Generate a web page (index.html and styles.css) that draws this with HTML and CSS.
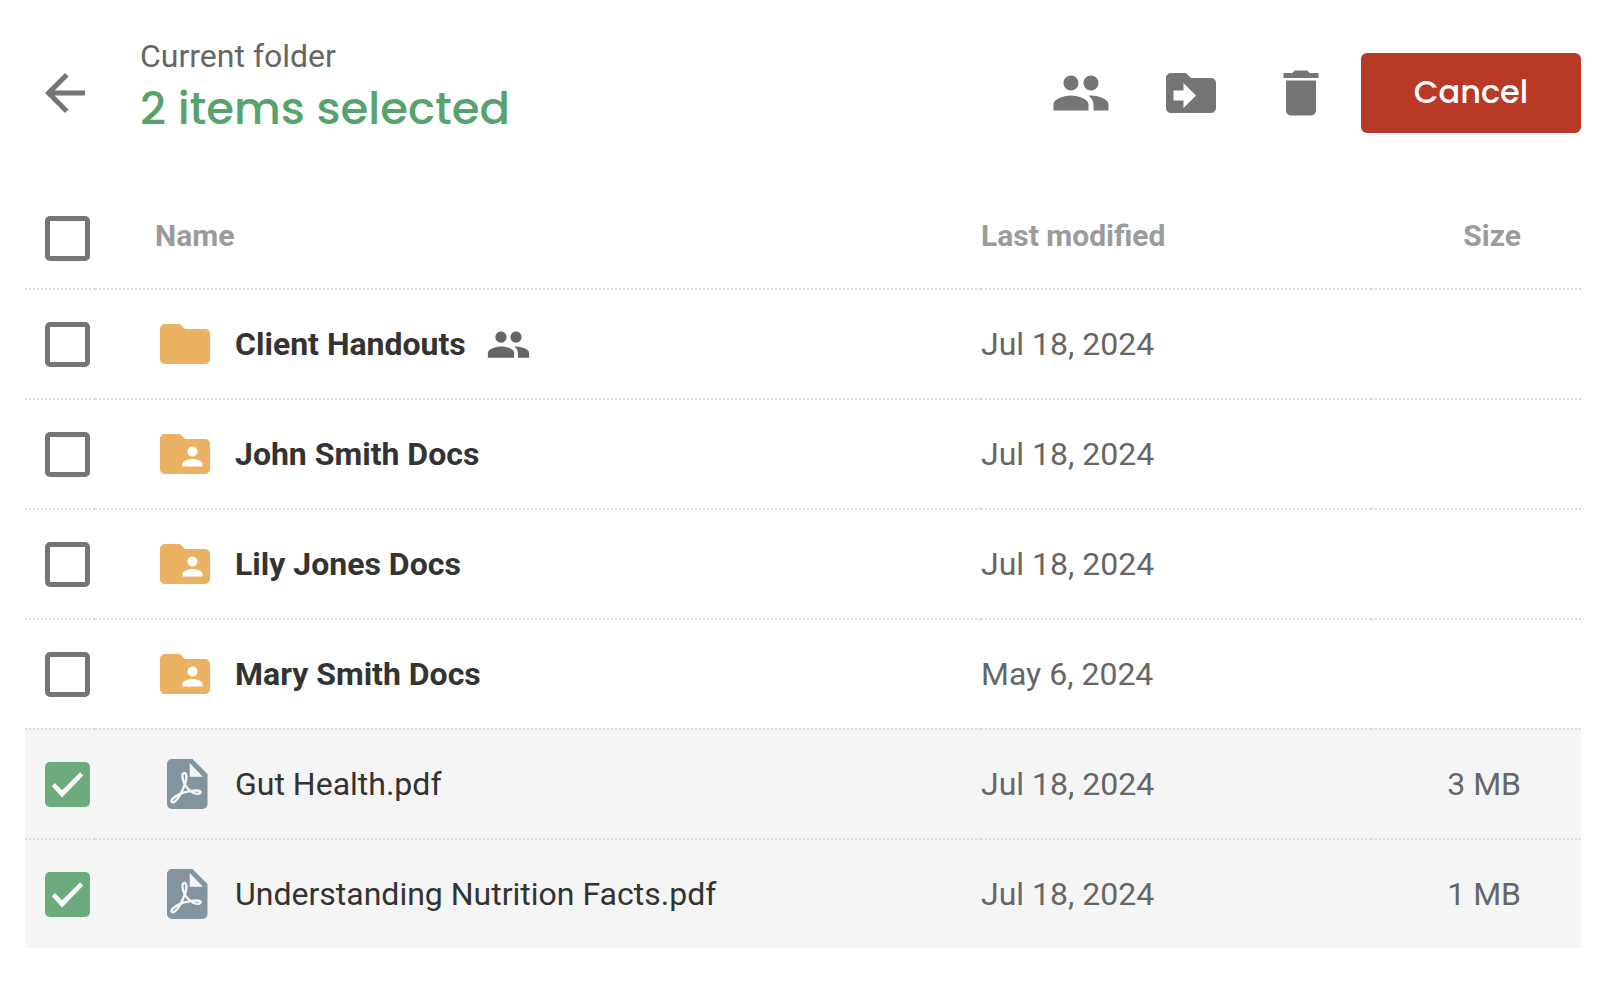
FILE: index.html
```html
<!DOCTYPE html>
<html lang="en">
<head>
<meta charset="utf-8">
<meta name="viewport" content="width=device-width, initial-scale=1">
<title>Documents</title>
<link rel="stylesheet" href="styles.css">
</head>
<body>
<svg class="sprite" aria-hidden="true">
  <symbol id="i-back" viewBox="0 0 24 24"><path d="M20 11H7.83l5.59-5.59L12 4l-8 8 8 8 1.41-1.41L7.83 13H20v-2z"/></symbol>
  <symbol id="i-group" viewBox="0 0 24 24"><path d="M16 11c1.66 0 2.99-1.34 2.99-3S17.66 5 16 5s-3 1.34-3 3 1.34 3 3 3zm-8 0c1.66 0 2.99-1.34 2.99-3S9.66 5 8 5 5 6.34 5 8s1.34 3 3 3zm0 2c-2.33 0-7 1.17-7 3.5V19h14v-2.5c0-2.33-4.67-3.5-7-3.5zm8 0c-.29 0-.62.02-.97.05 1.16.84 1.97 1.97 1.97 3.45V19h6v-2.5c0-2.33-4.67-3.5-7-3.5z"/></symbol>
  <symbol id="i-move" viewBox="0 0 24 24"><path d="M20 6h-8l-2-2H4c-1.1 0-2 .9-2 2v12c0 1.1.9 2 2 2h16c1.1 0 2-.9 2-2V8c0-1.1-.9-2-2-2zM9 18v-3H5v-4h4V8l5 5-5 5z"/></symbol>
  <symbol id="i-delete" viewBox="0 0 24 24"><path d="M6 19c0 1.1.9 2 2 2h8c1.1 0 2-.9 2-2V7H6v12zM19 4h-3.5l-1-1h-5l-1 1H5v2h14V4z"/></symbol>
  <symbol id="i-folder" viewBox="0 0 24 24"><path d="M10 4H4c-1.1 0-2 .9-2 2v12c0 1.1.9 2 2 2h16c1.1 0 2-.9 2-2V8c0-1.1-.9-2-2-2h-8l-2-2z"/></symbol>
  <symbol id="i-folder-person" viewBox="0 0 24 24"><path d="M20 6h-8l-2-2H4c-1.1 0-2 .9-2 2v12c0 1.1.9 2 2 2h16c1.1 0 2-.9 2-2V8c0-1.1-.9-2-2-2zm-5 3c1.1 0 2 .9 2 2s-.9 2-2 2-2-.9-2-2 .9-2 2-2zm4 8h-8v-1c0-1.33 2.67-2 4-2s4 .67 4 2v1z"/></symbol>
  <symbol id="i-pdf" viewBox="-12 -5 60 60">
    <path d="M5 0H25.500L40.500 15V45a5 5 0 0 1-5 5H5a5 5 0 0 1-5-5V5a5 5 0 0 1 5-5zM22.700 4V17.700H35.900z"/>
    <path class="pdf-mark" d="M17.300 14C14.600 14 15 20.500 17.800 25.500C20.500 30 25.500 34.800 30 34.900C33.500 35 34.800 32.800 32.800 32C29 30.800 18 32.300 12.500 35.200C7 37.800 3.600 41 4.600 42.800C6 44.700 10 41.500 13 36C16.500 29.500 19.400 23 19.400 18C19.400 15.200 18.600 14 17.300 14z"/>
  </symbol>
</svg>

<header class="toolbar">
  <button class="icon-button" type="button" aria-label="Back"><svg class="icon"><use href="#i-back"/></svg></button>
  <div class="heading">
    <p class="heading-label">Current folder</p>
    <h1 class="heading-title">2 items selected</h1>
  </div>
  <div class="actions">
    <button class="icon-button" type="button" aria-label="Share"><svg class="icon"><use href="#i-group"/></svg></button>
    <button class="icon-button" type="button" aria-label="Move"><svg class="icon"><use href="#i-move"/></svg></button>
    <button class="icon-button" type="button" aria-label="Delete"><svg class="icon"><use href="#i-delete"/></svg></button>
  </div>
  <button class="cancel" type="button">Cancel</button>
</header>

<main class="content">
  <table class="files">
    <colgroup><col class="col-check"><col><col class="col-date"><col class="col-size"></colgroup>
    <thead>
      <tr>
        <th class="check"><input class="checkbox" type="checkbox" aria-label="Select all"></th>
        <th class="name" scope="col">Name</th>
        <th scope="col">Last modified</th>
        <th class="size" scope="col">Size</th>
      </tr>
    </thead>
    <tbody>
      <tr>
        <td class="check"><input class="checkbox" type="checkbox" id="f1"></td>
        <td class="name"><div class="item"><svg class="icon folder"><use href="#i-folder"/></svg><label class="folder-name" for="f1">Client Handouts</label><svg class="shared"><use href="#i-group"/></svg></div></td>
        <td>Jul 18, 2024</td>
        <td class="size"></td>
      </tr>
      <tr>
        <td class="check"><input class="checkbox" type="checkbox" id="f2"></td>
        <td class="name"><div class="item"><svg class="icon folder"><use href="#i-folder-person"/></svg><label class="folder-name" for="f2">John Smith Docs</label></div></td>
        <td>Jul 18, 2024</td>
        <td class="size"></td>
      </tr>
      <tr>
        <td class="check"><input class="checkbox" type="checkbox" id="f3"></td>
        <td class="name"><div class="item"><svg class="icon folder"><use href="#i-folder-person"/></svg><label class="folder-name" for="f3">Lily Jones Docs</label></div></td>
        <td>Jul 18, 2024</td>
        <td class="size"></td>
      </tr>
      <tr>
        <td class="check"><input class="checkbox" type="checkbox" id="f4"></td>
        <td class="name"><div class="item"><svg class="icon folder"><use href="#i-folder-person"/></svg><label class="folder-name" for="f4">Mary Smith Docs</label></div></td>
        <td>May 6, 2024</td>
        <td class="size"></td>
      </tr>
      <tr class="selected">
        <td class="check"><input class="checkbox" type="checkbox" id="f5" checked></td>
        <td class="name"><div class="item"><svg class="icon pdf"><use href="#i-pdf"/></svg><label for="f5">Gut Health.pdf</label></div></td>
        <td>Jul 18, 2024</td>
        <td class="size">3 MB</td>
      </tr>
      <tr class="selected">
        <td class="check"><input class="checkbox" type="checkbox" id="f6" checked></td>
        <td class="name"><div class="item"><svg class="icon pdf"><use href="#i-pdf"/></svg><label for="f6">Understanding Nutrition Facts.pdf</label></div></td>
        <td>Jul 18, 2024</td>
        <td class="size">1 MB</td>
      </tr>
    </tbody>
  </table>
</main>
</body>
</html>
```
FILE: styles.css
```css
* { box-sizing: border-box; }

body {
  margin: 0;
  background: #fff;
  color: #666;
  font-family: Roboto, "Liberation Sans", sans-serif;
  font-size: 32px;
  line-height: 38px;
}

.sprite { position: absolute; width: 0; height: 0; }

.icon {
  display: block;
  flex: none;
  width: 60px;
  height: 60px;
  fill: currentColor;
}

.toolbar {
  display: flex;
  align-items: center;
  padding: 37px 23px 39px 35px;
}

.icon-button {
  padding: 0;
  border: 0;
  background: none;
  color: #757575;
  cursor: pointer;
}

.heading {
  flex: 1;
  margin-left: 45px;
  padding-bottom: 6px;
}

.heading-label { margin: 0; }

.heading-title {
  margin: 0;
  color: #57a36b;
  font-family: Poppins, Inter, sans-serif;
  font-size: 45px;
  font-weight: 500;
  line-height: 68px;
}

.actions {
  display: flex;
  gap: 50px;
  margin-right: 30px;
}

.cancel {
  min-width: 220px;
  height: 80px;
  padding: 0 40px 2px;
  border: 0;
  border-radius: 6px;
  background: #b83926;
  color: #fff;
  font-family: Poppins, Inter, sans-serif;
  font-size: 32px;
  font-weight: 500;
  cursor: pointer;
}

.content { padding: 0 23px 40px 25px; }

.files {
  width: 100%;
  border-spacing: 0;
  table-layout: fixed;
}

.col-check { width: 70px; }
.col-date { width: 390px; }
.col-size { width: 210px; }

.files th,
.files td {
  padding: 0;
  text-align: left;
  vertical-align: middle;
}

.files th {
  height: 100px;
  padding-bottom: 4px;
  color: #9b9b9b;
  font-size: 30px;
  font-weight: 700;
}

.files td {
  height: 110px;
  border-top: 2px dotted #ddd;
}

.files .check { padding: 0 0 0 20px; }
.files .name { padding-left: 60px; }
.files .size { padding-right: 60px; text-align: right; }

.selected { background: #f5f5f5; }

.item {
  display: flex;
  align-items: center;
  gap: 20px;
  color: #333;
}

.folder { color: #ebb263; }
.folder-name { font-weight: 700; }
.pdf { color: #84949f; }

.pdf-mark {
  fill: none;
  stroke: #f5f5f5;
  stroke-width: 2.4;
}

.shared {
  width: 45px;
  height: 45px;
  fill: #666;
}

.checkbox {
  display: block;
  width: 45px;
  height: 45px;
  margin: 0;
  border: 5px solid #757575;
  border-radius: 5px;
  background: #fff;
  appearance: none;
  cursor: pointer;
}

.checkbox:checked {
  border: 0;
  background: #6bab7d;
}

.checkbox:checked::before {
  content: "";
  display: block;
  width: 100%;
  height: 100%;
  background: #fafafa;
  clip-path: polygon(15% 55%, 22% 48%, 38% 64%, 78% 24%, 85% 31%, 38% 80%);
}
```
